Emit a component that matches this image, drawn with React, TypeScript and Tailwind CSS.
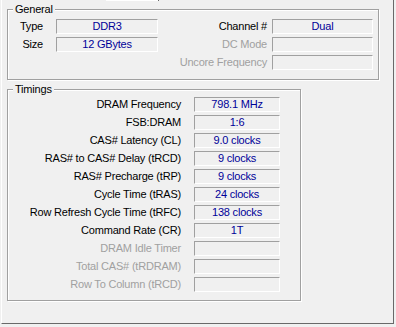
import React from 'react';

const font = { fontFamily: '"Liberation Sans", Arial, sans-serif' };

const Field = ({ value, w }: { value?: string; w: string }) => (
  <div
    className={`${w} h-[15px] shrink-0 border-t border-l border-t-[#a0a0a0] border-l-[#a0a0a0] border-b border-r border-b-white border-r-white text-center text-[#000099] leading-[13px]`}
  >
    {value}
  </div>
);

const Group = ({ title, className, children }: { title: string; className: string; children: React.ReactNode }) => (
  <div
    className={`relative border border-[#a0a0a0] shadow-[1px_1px_0_#fff,inset_1px_1px_0_#fff] ${className}`}
  >
    <span className="absolute -top-[7px] left-[5px] bg-[#f0f0f0] px-[2px] leading-[13px] text-black">{title}</span>
    {children}
  </div>
);

const timings: [string, string | undefined, boolean][] = [
  ['DRAM Frequency', '798.1 MHz', true],
  ['FSB:DRAM', '1:6', true],
  ['CAS# Latency (CL)', '9.0 clocks', true],
  ['RAS# to CAS# Delay (tRCD)', '9 clocks', true],
  ['RAS# Precharge (tRP)', '9 clocks', true],
  ['Cycle Time (tRAS)', '24 clocks', true],
  ['Row Refresh Cycle Time (tRFC)', '138 clocks', true],
  ['Command Rate (CR)', '1T', true],
  ['DRAM Idle Timer', undefined, false],
  ['Total CAS# (tRDRAM)', undefined, false],
  ['Row To Column (tRCD)', undefined, false],
];

export default function App() {
  return (
    <div className="w-[396px] h-[327px] bg-[#f0f0f0] overflow-hidden text-[11px] tracking-[-0.2px]" style={font}>
      <div className="relative ml-[1px] w-[393px] h-[324px] border-l border-l-white border-r border-b border-[#696969]">
        {/* selected tab edge */}
        <div className="absolute top-0 left-[104px] w-[53px] h-[1px] bg-white border-r border-[#696969]" />

        <div className="pt-[9px] pl-[5px]">
          <Group title="General" className="w-[372px] h-[71px] pt-[9px]">
            <div className="flex flex-col gap-[3px]">
              <div className="flex items-center">
                <span className="w-[35px] text-right leading-[15px]">Type</span>
                <div className="ml-[13px]"><Field w="w-[102px]" value="DDR3" /></div>
                <span className="w-[109px] text-right leading-[15px]">Channel #</span>
                <div className="ml-[5px]"><Field w="w-[101px]" value="Dual" /></div>
              </div>
              <div className="flex items-center">
                <span className="w-[35px] text-right leading-[15px]">Size</span>
                <div className="ml-[13px]"><Field w="w-[102px]" value="12 GBytes" /></div>
                <span className="w-[109px] text-right leading-[15px] text-[#a0a0a0]">DC Mode</span>
                <div className="ml-[5px]"><Field w="w-[101px]" /></div>
              </div>
              <div className="flex items-center">
                <span className="w-[35px]" />
                <div className="ml-[13px] w-[102px]" />
                <span className="w-[109px] text-right leading-[15px] text-[#a0a0a0] whitespace-nowrap">Uncore Frequency</span>
                <div className="ml-[5px]"><Field w="w-[101px]" /></div>
              </div>
            </div>
          </Group>

          <div className="h-[9px]" />

          <Group title="Timings" className="w-[294px] h-[212px] pt-[7px]">
            <div className="flex flex-col gap-[3px]">
              {timings.map(([label, value, enabled]) => (
                <div key={label} className="flex items-center">
                  <span
                    className={`w-[173px] text-right leading-[15px] whitespace-nowrap ${enabled ? 'text-black' : 'text-[#a0a0a0]'}`}
                  >
                    {label}
                  </span>
                  <div className="ml-[13px]"><Field w="w-[86px]" value={value} /></div>
                </div>
              ))}
            </div>
          </Group>
        </div>
      </div>
    </div>
  );
}
